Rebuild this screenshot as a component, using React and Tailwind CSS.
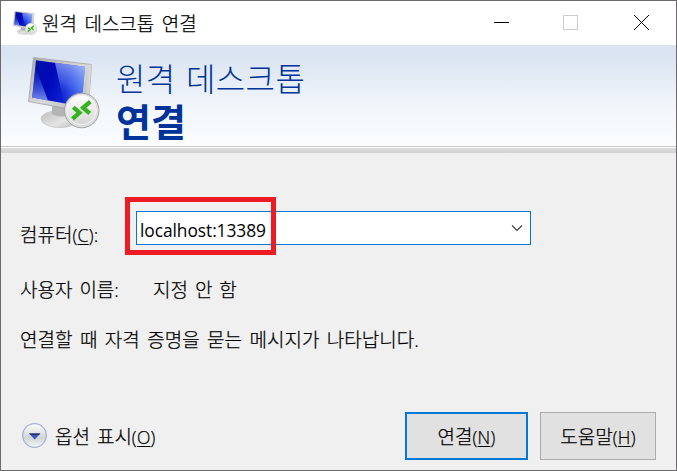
import React from 'react';

function MonitorIcon({ className }) {
  return (
    <svg className={className} viewBox="0 0 72 72">
      <defs>
        <linearGradient id="frame" x1="0" y1="0" x2="1" y2="1">
          <stop offset="0" stopColor="#a9a9a9" />
          <stop offset="0.5" stopColor="#d9d9d9" />
          <stop offset="1" stopColor="#b5b5b5" />
        </linearGradient>
        <linearGradient id="screen" x1="0" y1="0" x2="1" y2="0.3">
          <stop offset="0" stopColor="#0014a0" />
          <stop offset="0.4" stopColor="#0008b8" />
          <stop offset="0.75" stopColor="#0a20d0" />
          <stop offset="1" stopColor="#3a60e8" />
        </linearGradient>
        <linearGradient id="glare" x1="0.7" y1="0" x2="0.4" y2="1">
          <stop offset="0" stopColor="#c0d4ff" stopOpacity="0.75" />
          <stop offset="0.5" stopColor="#6d90ff" stopOpacity="0.5" />
          <stop offset="1" stopColor="#1020d0" stopOpacity="0.1" />
        </linearGradient>
        <linearGradient id="shine" x1="0" y1="0" x2="0" y2="1">
          <stop offset="0" stopColor="#2040d8" stopOpacity="0.1" />
          <stop offset="1" stopColor="#8098f4" stopOpacity="0.9" />
        </linearGradient>
        <linearGradient id="stand" x1="0" y1="0" x2="1" y2="1">
          <stop offset="0" stopColor="#bcbcbc" />
          <stop offset="0.6" stopColor="#e4e4e4" />
          <stop offset="1" stopColor="#b8b8b8" />
        </linearGradient>
        <linearGradient id="disc" x1="0" y1="0" x2="0" y2="1">
          <stop offset="0" stopColor="#ffffff" />
          <stop offset="1" stopColor="#d4d4d4" />
        </linearGradient>
      </defs>
      <ellipse cx="32" cy="62" rx="19" ry="8.6" fill="url(#stand)" stroke="#c2c2c2" strokeWidth="0.7" />
      <path d="M24 48h18v9q-9 5-18 0z" fill="#b4b4b4" />
      <path d="M5.5 0.5L63.5 7.5L60 55.5L0.5 44.5z" fill="url(#frame)" stroke="#a4a4a4" strokeWidth="0.8" />
      <path d="M60.5 7.5l3 0.3L60 55.5l-3-0.6z" fill="#d6d6d6" />
      <path d="M8 3.2L57 9.7L53.5 49.6L4.2 40.5z" fill="url(#screen)" />
      <path d="M27 5.8L57 9.7L53.5 49.6L36 46.4z" fill="url(#glare)" />
      <path d="M7.4 10L20 43.4L4.2 40.5z" fill="url(#shine)" />
      <circle cx="53.7" cy="53.5" r="17.3" fill="#dcdcdc" stroke="#a4a4a4" strokeWidth="1" />
      <circle cx="53.5" cy="53" r="14.8" fill="url(#disc)" stroke="#f6f6f6" strokeWidth="1" />
      <path d="M45.3 50.2l6.2 5.6l-7 6M62.3 44.6l-7.2 6.2l6.6 5.6" fill="none" stroke="#32b41c" strokeWidth="4.2" />
    </svg>
  );
}

function Accel({ children }) {
  return (
    <span className="text-[17.5px] tracking-[0.3px]">
      (<span className="underline decoration-1 underline-offset-2">{children}</span>)
    </span>
  );
}

const font = "font-['Open_Sans','Noto_Sans_CJK_KR',sans-serif]";

export default function App() {
  return (
    <div className={`${font} flex h-[471px] w-[677px] flex-col overflow-hidden border border-[#6c6a6c] bg-[#f0f0f0] text-[19px] leading-6 font-light whitespace-nowrap text-black [-webkit-text-stroke:0.25px]`}>
      <header className="flex h-11 shrink-0 items-center bg-white pl-3">
        <MonitorIcon className="size-6" />
        <h1 className="mt-px ml-[5px] [word-spacing:2.5px]">원격 데스크톱 연결</h1>
        <svg className="ml-auto h-11 w-[182px]" viewBox="0 0 182 44" fill="none" shapeRendering="crispEdges">
          <path d="M0 21.5h15" stroke="#000" />
          <rect x="69.5" y="14.5" width="14" height="14" stroke="#ccc" />
          <path d="M140 14l15 15M155 14l-15 15" stroke="#000" shapeRendering="auto" />
        </svg>
      </header>

      <section className="flex h-[101px] shrink-0 bg-linear-to-b from-[#dae4f2] from-10% via-[#f3f7fb] via-65% to-[#fbfdfe] pl-[27px] text-[#003399]">
        <MonitorIcon className="mt-3 size-[72px]" />
        <div className="ml-4 flex flex-col">
          <span className="mt-[14px] text-[32px] leading-10 tracking-[0.4px] [word-spacing:1.5px] [-webkit-text-stroke:0]">원격 데스크톱</span>
          <span className="mt-0.5 text-[38px] leading-10 font-bold [-webkit-text-stroke:0]">연결</span>
        </div>
      </section>
      <div className="h-[7px] shrink-0 border-t border-[#c8c8c8] bg-linear-to-b from-white from-17% via-[#dcdcdc] via-17% to-[#d2d2d2]" />

      <main className="flex grow flex-col pl-[19px]">
        <div className="mt-[43px] flex h-[58px]">
          <label className="mt-[27px] w-[105px]">컴퓨터<Accel>C</Accel>:</label>
          <div className="relative mt-[15px] ml-[11px] flex h-[34px] w-[395px] items-center justify-between border border-[#0078d7] bg-white pr-[7px] pl-[3px]">
            <span className="mt-[3px] text-[17.4px] tracking-[-0.08px] font-normal [-webkit-text-stroke:0]">localhost:13389</span>
            <svg className="size-3" viewBox="0 0 12 12" fill="none">
              <path d="M1 3.5l5 5l5-5" stroke="#404040" strokeWidth="1.2" />
            </svg>
            <div className="absolute -top-[15px] -left-[12px] h-[58px] w-[151px] border-5 border-[#ed1c24]" />
          </div>
        </div>
        <div className="mt-[24px] flex [word-spacing:2px]">
          <span className="w-[133px]">사용자 이름:</span>
          <span>지정 안 함</span>
        </div>
        <p className="mt-[26px] [word-spacing:2.5px]">연결할 때 자격 증명을 묻는 메시지가 나타납니다.</p>
        <footer className="mt-auto mb-[10px] flex h-12 items-center pr-5">
          <svg className="ml-[2px] size-[26px]" viewBox="0 0 26 26">
            <defs>
              <linearGradient id="orb" x1="0" y1="0" x2="0" y2="1">
                <stop offset="0" stopColor="#fff" />
                <stop offset="0.6" stopColor="#d0d6d4" />
                <stop offset="1" stopColor="#f5f8f7" />
              </linearGradient>
            </defs>
            <circle cx="12.5" cy="12.5" r="11.8" fill="url(#orb)" stroke="#a8b0dc" strokeWidth="1.3" />
            <path d="M7 10.5h11.4l-5.7 6z" fill="#3a58c4" />
            <path d="M7 10.5h11.4l-1.5 1.6H8.5z" fill="#203464" />
          </svg>
          <span className="mt-px ml-[7px] [word-spacing:2px]">옵션 표시<Accel>O</Accel></span>
          <button className="ml-auto h-12 w-[123px] border-2 border-[#0078d7] bg-[#e1e1e1] pt-0.5">연결<Accel>N</Accel></button>
          <button className="ml-3 h-12 w-[116px] border border-[#adadad] bg-[#e1e1e1] pt-0.5">도움말<Accel>H</Accel></button>
        </footer>
      </main>
    </div>
  );
}
